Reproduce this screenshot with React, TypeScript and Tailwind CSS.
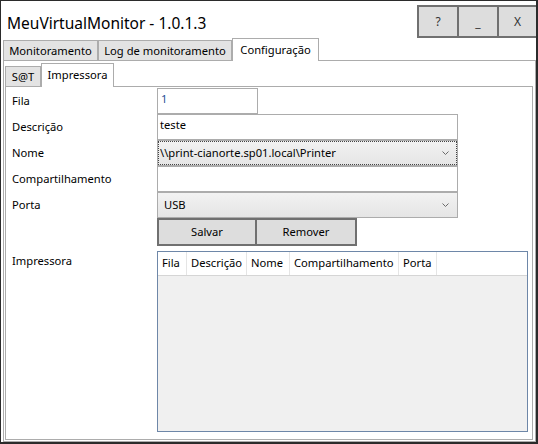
import React from "react";

const Chevron = () => (
  <svg width="7" height="4" viewBox="0 0 7 4" className="text-[#6a6a6a]">
    <path d="M0.5 0.5 L3.5 3.5 L6.5 0.5" fill="none" stroke="currentColor" strokeWidth="1" />
  </svg>
);

const rowLabels = ["Fila", "Descrição", "Nome", "Compartilhamento", "Porta"];

const columns = [
  { name: "Fila", w: "w-[29px]" },
  { name: "Descrição", w: "w-[60px]" },
  { name: "Nome", w: "w-[43px]" },
  { name: "Compartilhamento", w: "w-[109px]" },
  { name: "Porta", w: "w-[38px]" },
];

export default function App() {
  return (
    <div className="w-[538px] h-[444px] bg-white border border-r-2 border-b-2 border-[#2b2b2b] flex flex-col font-['Noto_Sans',sans-serif] text-[11.2px] text-black overflow-hidden">
      {/* Title bar */}
      <div className="h-[37px] flex shrink-0">
        <div className="flex-1 pl-[6px] pt-[11px] text-[15.5px] leading-[22px]">MeuVirtualMonitor - 1.0.1.3</div>
        <div className="mt-[4px] h-[33px] flex border-y-2 border-[#707070] bg-[#dddddd] text-[#333] text-[12px]">
          <div className="w-[40px] border-l-2 border-[#707070] flex items-center justify-center">?</div>
          <div className="w-[40px] border-l-2 border-[#707070] flex items-end justify-center pb-[4px]">_</div>
          <div className="w-[39px] border-l-2 border-[#707070] flex items-center justify-center">X</div>
        </div>
      </div>

      {/* Main tabs */}
      <div className="h-[22px] flex items-end pl-[2px] shrink-0">
        <div className="w-[95px] h-[20px] border border-b-0 border-[#acacac] bg-[#e3e3e3] flex items-center justify-center pt-[1px]">
          Monitoramento
        </div>
        <div className="w-[134px] h-[20px] border border-b-0 border-[#acacac] bg-[#e3e3e3] flex items-center justify-center pt-[1px]">
          Log de monitoramento
        </div>
        <div className="w-[87px] h-[23px] -mb-px relative z-10 border border-b-0 border-[#acacac] bg-white flex items-center justify-center">
          Configuração
        </div>
      </div>

      {/* Outer panel */}
      <div className="flex-1 ml-[2px] border border-[#acacac] flex flex-col pl-[1px] pr-[2px] pb-[1px]">
        {/* Inner tabs */}
        <div className="h-[25px] flex items-end shrink-0">
          <div className="w-[36px] h-[20px] border border-b-0 border-[#acacac] bg-[#e3e3e3] flex items-center justify-center pt-[1px]">
            S@T
          </div>
          <div className="w-[73px] h-[24px] -mb-px relative z-10 border border-b-0 border-[#acacac] bg-white flex items-center justify-center">
            Impressora
          </div>
        </div>

        {/* Inner panel */}
        <div className="flex-1 border border-[#acacac] pt-[1px] pl-[6px]">
          <div className="flex">
            <div className="w-[145px] flex flex-col">
              {rowLabels.map((l) => (
                <div key={l} className="h-[26px] flex items-center pt-[1px]">{l}</div>
              ))}
            </div>
            <div className="flex flex-col">
              <div className="w-[101px] h-[26px] border border-[#acacac] px-[3px] pt-[2px] text-[#1f4f96]">1</div>
              <div className="w-[301px] h-[26px] border border-[#acacac] px-[2px] pt-[2px]">teste</div>
              <div className="w-[301px] h-[26px] border border-[#acacac] bg-linear-to-b from-[#f2f2f2] to-[#e5e5e5] outline-1 outline-dotted outline-[#444] -outline-offset-2 flex items-center justify-between pl-[2px] pr-[8px]">
                <span>{"\\\\print-cianorte.sp01.local\\Printer"}</span>
                <Chevron />
              </div>
              <div className="w-[301px] h-[26px] border border-[#acacac]"></div>
              <div className="w-[301px] h-[26px] border border-[#acacac] bg-linear-to-b from-[#f2f2f2] to-[#e5e5e5] flex items-center justify-between pl-[6px] pr-[8px]">
                <span>USB</span>
                <Chevron />
              </div>
              <div className="flex">
                <div className="w-[100px] h-[28px] border-2 border-[#707070] bg-[#dddddd] flex items-center justify-center">Salvar</div>
                <div className="w-[100px] h-[28px] border-2 border-l-0 border-[#707070] bg-[#dddddd] flex items-center justify-center">Remover</div>
              </div>
            </div>
          </div>

          {/* List */}
          <div className="flex mt-[5px]">
            <div className="w-[145px] pt-[2px]">Impressora</div>
            <div className="w-[371px] h-[181px] border border-[#6e87a8] bg-[#f0f0f0] flex flex-col">
              <div className="h-[24px] bg-white border-b border-[#d5d5d5] flex">
                {columns.map((c) => (
                  <div key={c.name} className={`${c.w} border-r border-[#e5e5e5] flex items-center pl-[4px]`}>
                    {c.name}
                  </div>
                ))}
              </div>
            </div>
          </div>
        </div>
      </div>
    </div>
  );
}
